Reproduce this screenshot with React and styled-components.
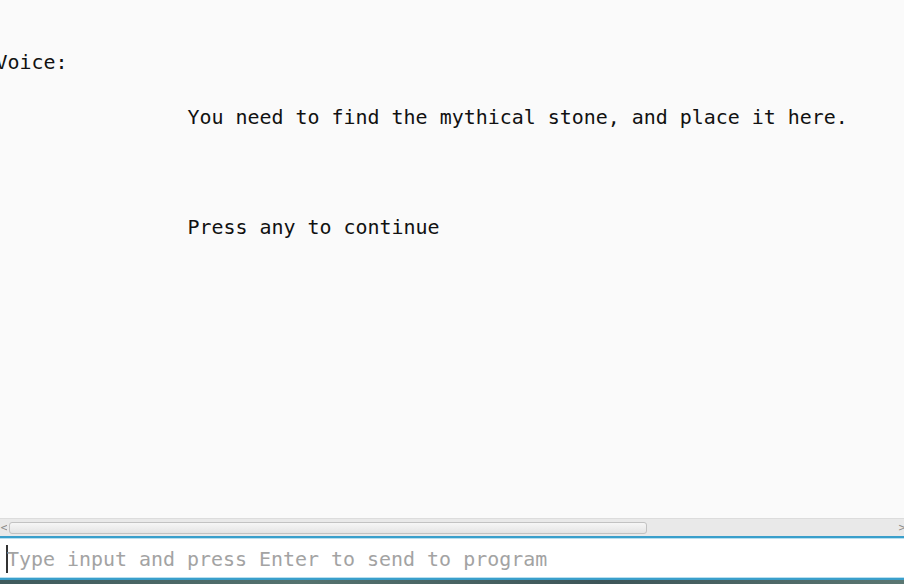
import React from "react";
import styled, { createGlobalStyle } from "styled-components";

const Global = createGlobalStyle`
  html, body {
    margin: 0;
    padding: 0;
    width: 904px;
    height: 584px;
    overflow: hidden;
    background: #fafafa;
  }
`;

const Window = styled.div`
  display: flex;
  flex-direction: column;
  width: 904px;
  height: 584px;
  background: #fafafa;
`;

const Output = styled.pre`
  flex: 1;
  margin: 0 0 0 -4.5px;
  padding: 49px 0 0 0;
  font-family: "DejaVu Sans Mono", "Liberation Mono", monospace;
  font-size: 19.95px;
  line-height: 27.5px;
  color: #111;
  overflow: hidden;
  white-space: pre;
`;

const ScrollBar = styled.div`
  display: flex;
  align-items: center;
  height: 17px;
  background: #e9e9e9;
  border-top: 1px solid #dcdcdc;
`;

const Arrow = styled.span`
  width: ${(p) => p.w}px;
  font-family: "DejaVu Sans", sans-serif;
  font-size: 10px;
  color: #8a8a8a;
  text-align: center;
  line-height: 17px;
  overflow: hidden;
`;

const Track = styled.div`
  flex: 1;
  height: 17px;
  display: flex;
  align-items: center;
`;

const Thumb = styled.div`
  width: 638px;
  height: 12px;
  margin-left: 2px;
  border: 1px solid #c2c2c2;
  border-radius: 3px;
  background: linear-gradient(#f6f6f6, #e4e4e4);
  box-sizing: border-box;
`;

const InputWrap = styled.div`
  height: 38px;
  padding-top: 2px;
  border-top: 2px solid #3a9fcb;
  border-bottom: 2px solid #3a9fcb;
  background: #fff;
  display: flex;
  align-items: center;
  box-shadow: inset 0 1px 0 #b8e0f0, inset 0 -1px 0 #b8e0f0;
`;

const Input = styled.input`
  flex: 1;
  border: none;
  outline: none;
  background: transparent;
  padding: 0 0 0 7px;
  font-family: "DejaVu Sans Mono", "Liberation Mono", monospace;
  font-size: 19.95px;
  color: #111;
  &::placeholder {
    color: #a3a3a3;
  }
`;

const Caret = styled.span`
  width: 2px;
  height: 28px;
  background: #333;
  margin-left: 6px;
  margin-right: -8px;
`;

const Desktop = styled.div`
  height: 4px;
  background: linear-gradient(90deg, #3f5a5c, #55736f, #3d5558, #5b7772);
`;

const text = `Voice:

                You need to find the mythical stone, and place it here.



                Press any to continue`;

export default function App() {
  return (
    <Window>
      <Global />
      <Output>{text}</Output>
      <ScrollBar>
        <Arrow w={7}>&lt;</Arrow>
        <Track>
          <Thumb />
        </Track>
        <Arrow w={6}>&gt;</Arrow>
      </ScrollBar>
      <InputWrap>
        <Caret />
        <Input placeholder="Type input and press Enter to send to program" />
      </InputWrap>
      <Desktop />
    </Window>
  );
}
